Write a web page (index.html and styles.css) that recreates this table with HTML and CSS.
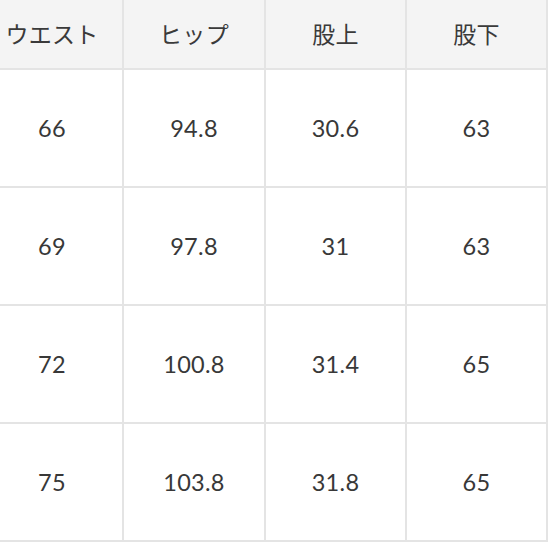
FILE: index.html
```html
<!DOCTYPE html>
<html lang="ja">
<head>
<meta charset="utf-8">
<link rel="stylesheet" href="styles.css">
</head>
<body>
<div class="sheet">
  <div class="size-table">
    <div class="cell head">ウエスト</div>
    <div class="cell head">ヒップ</div>
    <div class="cell head">股上</div>
    <div class="cell head">股下</div>

    <div class="cell">66</div>
    <div class="cell">94.8</div>
    <div class="cell">30.6</div>
    <div class="cell">63</div>

    <div class="cell">69</div>
    <div class="cell">97.8</div>
    <div class="cell">31</div>
    <div class="cell">63</div>

    <div class="cell">72</div>
    <div class="cell">100.8</div>
    <div class="cell">31.4</div>
    <div class="cell">65</div>

    <div class="cell">75</div>
    <div class="cell">103.8</div>
    <div class="cell">31.8</div>
    <div class="cell">65</div>
  </div>
</div>
</body>
</html>
```

FILE: styles.css
```css
html, body {
  margin: 0;
  padding: 0;
  background: #ffffff;
}

body {
  width: 551px;
  height: 551px;
  overflow: hidden;
  font-family: Lato, "Noto Sans CJK JP", sans-serif;
  color: #383838;
}

.sheet {
  margin-left: -18px;
}

.size-table {
  display: inline-grid;
  grid-template-columns: 140px 140px 139px 139px;
  grid-template-rows: 68px 116px 116px 116px 116px;
  gap: 2px;
  background: #e4e4e4;
  border-right: 2px solid #e4e4e4;
  border-bottom: 2px solid #e4e4e4;
}

.cell {
  background: #ffffff;
  display: flex;
  align-items: center;
  justify-content: center;
  font-size: 23.5px;
  letter-spacing: 0.3px;
}

.cell.head {
  background: #f4f4f4;
  font-family: "Noto Sans CJK JP", sans-serif;
  font-size: 23px;
  font-weight: 400;
  color: #3a3a3a;
  padding-bottom: 2px;
}
```
